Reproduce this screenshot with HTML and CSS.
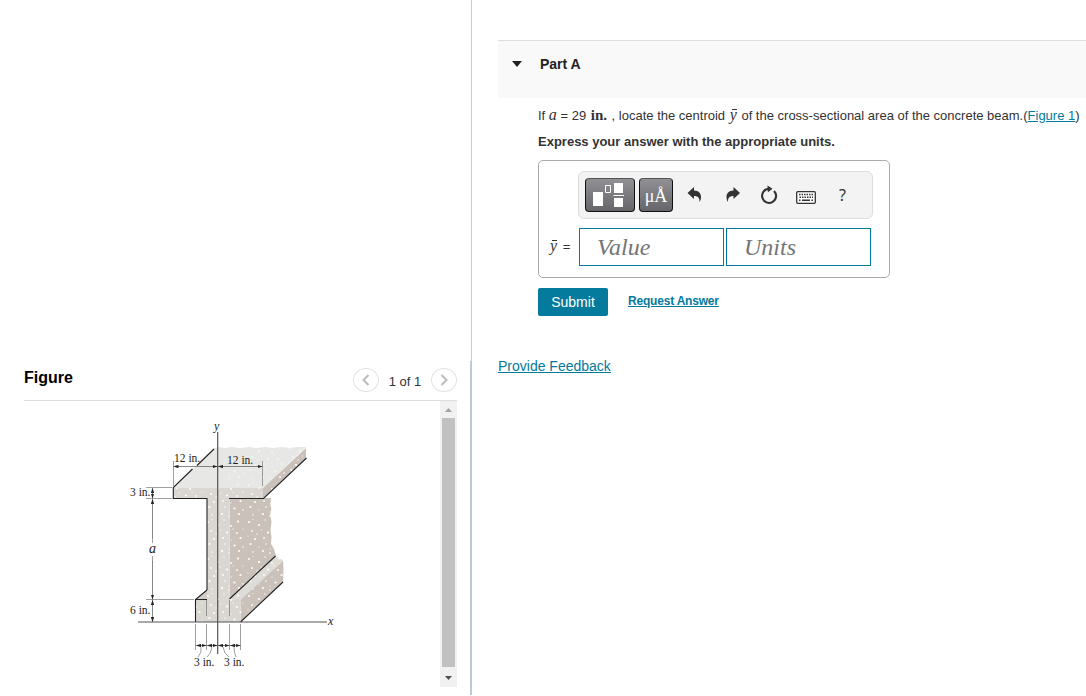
FILE: index.html
```
<!DOCTYPE html>
<html>
<head>
<meta charset="UTF-8">
<title>Part A</title>
<link rel="stylesheet" href="styles.css">
</head>
<body>
<div class="wrapper">
	<div class="left">
		<div class="figure-head">
			<h3>Figure</h3>
			<div class="pager">
				<button class="round"><svg width="10" height="14" viewBox="0 0 10 14"><path d="M7.500 2 2.500 7l5 5"/></svg></button>
				<span>1 of 1</span>
				<button class="round"><svg width="10" height="14" viewBox="0 0 10 14"><path d="M2.500 2l5 5-5 5"/></svg></button>
			</div>
		</div>
		<div class="figure-body">
			<svg class="beam" width="416" height="286" viewBox="24 401 416 286">
				<defs>
					<pattern id="specks" width="41" height="37" patternUnits="userSpaceOnUse">
						<g fill="#fff">
							<circle cx="3" cy="4" r="1"/><circle cx="7" cy="1.500" r=".6"/><circle cx="13" cy="7" r="1.100"/><circle cx="19" cy="2" r=".7"/>
							<circle cx="26" cy="8" r=".9"/><circle cx="33" cy="3.500" r="1.100"/><circle cx="38" cy="11" r=".6"/><circle cx="6" cy="13" r=".9"/>
							<circle cx="15.500" cy="12" r=".6"/><circle cx="22" cy="14.500" r="1.100"/><circle cx="32" cy="15" r=".9"/><circle cx="2" cy="18" r=".6"/>
							<circle cx="9" cy="21" r="1.100"/><circle cx="18" cy="20" r=".9"/><circle cx="26" cy="22" r=".6"/><circle cx="35.500" cy="20" r="1.100"/>
							<circle cx="4.500" cy="26" r="1.100"/><circle cx="13" cy="29" r=".6"/><circle cx="20" cy="26" r=".8"/><circle cx="29.500" cy="27.500" r="1.100"/>
							<circle cx="38" cy="29" r=".8"/><circle cx="7" cy="34" r=".8"/><circle cx="17" cy="33" r="1.100"/><circle cx="24" cy="35" r=".8"/>
							<circle cx="34" cy="33" r="1"/><circle cx="28" cy="11" r=".6"/><circle cx="11" cy="16" r=".7"/><circle cx="24" cy="31" r=".6"/>
						</g>
					</pattern>
					<marker id="arrow" viewBox="0 0 6 4" refX="6" refY="2" markerWidth="5" markerHeight="3.600" markerUnits="userSpaceOnUse" orient="auto-start-reverse"><path d="M0 0 6 2 0 4z" fill="#222"/></marker>
				</defs>
				<!-- web and base behind the front face -->
				<path fill="#cac1bb" d="M229.500 498H271l-.7 6 1 5-1 6 1.200 7-1 8 1 7-.5 7 3 5 2 7-46.500 43z"/>
				<path fill="#dedcd6" d="M229.500 599 275.500 556l3 1 2 2 2.500 1-42.500 41z"/>
				<path fill="#cac1bb" d="M240.500 600 283 560.500l.5 8-.5 14L240.500 622z"/>
				<path fill="#d2cbc6" d="M195.500 599.500 207 590v9.500z"/>
				<!-- flange -->
				<path fill="#e7e7e5" d="M173 488 214 448l5-1 6 1 7-1 8 1 9-1 7 1 9-1 8 1 9-1 8 1 7-1h9L263 488z"/>
				<path fill="#cac1bb" d="M263 488 306 448v10l-43 40.500z"/>
				<path fill="#dad7d2" d="M173 488h90v10.500h-33.500V599.500h11V622h-45v-22.500H207v-101h-34z"/>
				<path fill="url(#specks)" d="M173 488h90v10.500h-33.500V599.500h11V622h-45v-22.500H207v-101h-34z"/>
				<path fill="url(#specks)" d="M229.500 498H271v45l5 12 7 5v22L240.500 622v-22.500h-11zM263 488 306 448v10l-43 40.500z"/>
				<path fill="url(#specks)" opacity=".6" d="M214 488 250 448h56l-43 40z"/>
				<g class="edge">
					<path d="M192.500 469 173.300 487.500v11H207V590M229 498.500h34.500L306.500 458M197 465.500 214 449"/>
					<path d="M229.500 599 275.500 556M240.500 622 283 582M207 590 195.500 599.500V622M195.500 599.500H207"/>
				</g>
				<g class="thin">
					<path d="M206.500 600v16M229.500 600v16M146 487.500h26M146 498.500h26M146 599.500h48"/>
					<path d="M173.500 461v25M262.500 461v25M195.500 624v26M206.500 624v26M229.500 624v26M240.500 624v26"/>
					<path d="M201 647q1 6-3 10M212 647q-1 7-5 10M223 647q1 7 6 10M234 647q0 6 2 10"/>
				</g>
				<path class="axis" d="M217.700 432v222M138 622h189"/>
				<g class="dim">
					<path d="M173.500 466.500H217.500"/>
					<path d="M218 466.500h44.500"/>
					<path d="M152.500 488v10.500"/>
					<path d="M152.500 499v44"/>
					<path d="M152.500 600v22"/>
					<path d="M196 645.500h10.500"/>
					<path d="M207 645.500h10.500"/>
					<path d="M218 645.500h11.500"/>
					<path d="M230 645.500h10.500"/>
					<path d="M152.500 556v43.500"/>
				</g>
				<path fill="#fff" d="M150 538h5v5h-5zM150 556h5v5h-5z"/>
				<path class="thin" d="M152.500 537v6M152.500 556v6"/>
				<g class="label">
					<text x="174" y="462">12 in.</text>
					<text x="227" y="464">12 in.</text>
					<text x="130" y="496">3 in.</text>
					<text x="130" y="614">6 in.</text>
					<text x="194" y="666">3 in.</text>
					<text x="224" y="666">3 in.</text>
					<text class="var" x="214" y="430">y</text>
					<text class="var" x="328" y="625">x</text>
					<text class="var a" x="149" y="553">a</text>
				</g>
			</svg>
			<div class="scroll">
				<svg width="17" height="17" viewBox="0 0 17 17"><path fill="#a3a3a3" d="M5 11h7L8.500 7z"/></svg>
				<div class="thumb"></div>
				<svg width="17" height="20" viewBox="0 0 17 20"><path fill="#505050" d="M5 9h7l-3.500 4z"/></svg>
			</div>
		</div>
	</div>
	<div class="divider"></div>

	<div class="right">
		<div class="part">
			<svg width="10" height="6" viewBox="0 0 10 6"><path fill="#222" d="M0 0h10L5 6z"/></svg>
			<h4>Part A</h4>
		</div>
		<div class="content">
			<p class="question">If <i class="math">a</i> = 29 <span class="math unit">in.</span> , locate the centroid <i class="math bar">y</i> of the cross-sectional area of the concrete beam.(<a href="#">Figure 1</a>)</p>
			<p class="express">Express your answer with the appropriate units.</p>
			<div class="answer">
				<div class="toolbar">
					<button class="dark templates"><svg width="32" height="26" viewBox="0 0 32 26"><path fill="#fff" d="M0 10h10v14H0zM21 1h9v10h-9zM21 16h9v9h-9zM20.500 13h10.500v1H20.500z"/><path fill="none" stroke="#fff" d="M12.500 3.500h5v7h-5z"/></svg></button>
					<button class="dark units">μÅ</button>
					<svg class="tool undo" width="16" height="18" viewBox="0 0 16 18"><path fill="#333" d="M.5 7 7 1v3.500c5 0 7 3 7 6.500 0 2-.6 3.700-1.500 5 .2-4-1.300-6-5.500-6v3z"/></svg>
					<svg class="tool redo" width="16" height="18" viewBox="0 0 16 18"><path fill="#333" d="M15 7 8.500 1v3.500c-5 0-7 3-7 6.500 0 2 .6 3.700 1.500 5-.2-4 1.300-6 5.500-6v3z"/></svg>
					<svg class="tool reset" width="18" height="20" viewBox="0 0 18 20"><path fill="none" stroke="#333" stroke-width="2.100" d="M14 5.900A7 7 0 1 1 9 3.900"/><path fill="#333" d="M7.500.5 12.500 3.800l-4.600 3.400z"/></svg>
					<svg class="tool keyboard" width="20" height="13" viewBox="0 0 20 13"><rect x=".7" y=".7" width="18.600" height="11.600" rx="1" fill="#fff" stroke="#333" stroke-width="1.300"/><path fill="none" stroke="#333" stroke-width="1.500" stroke-dasharray="1.500 1" d="M3 3.500h14M3.500 6.200h13.500"/><path stroke="#333" stroke-width="1.500" d="M3 9.300h1.500M6 9.300h8M15.500 9.300H17"/></svg>
					<span class="help">?</span>
				</div>
				<div class="fields">
					<label><i class="math bar">y</i> =</label>
					<input class="field" type="text" placeholder="Value">
					<input class="field" type="text" placeholder="Units">
				</div>
			</div>
			<div class="actions">
				<button class="submit">Submit</button>
				<a class="request" href="#">Request Answer</a>
			</div>
		</div>
		<a class="feedback" href="#">Provide Feedback</a>
	</div>
</div>
</body>
</html>
```
FILE: styles.css
```
*{
	box-sizing:border-box;
}
body{
	margin:0;
	background:#fff;
	color:#333;
	font-family:"Liberation Sans", Arial, sans-serif;
	font-size:13px;
	overflow:hidden;
}
h3,h4,p{
	margin:0;
}
button{
	padding:0;
	font-family:inherit;
}
a{
	color:#047a9c;
}
.wrapper{
	display:flex;
	height:695px;
}
.left{
	width:470px;
	padding:361px 13px 0 24px;
	flex:none;
}
.figure-head{
	display:flex;
	justify-content:space-between;
	height:40px;
	border-bottom:1px solid #ddd;
}
.figure-head h3{
	padding-top:8px;
	color:#000;
	font-size:16px;
	line-height:18px;
}
.pager{
	display:flex;
	align-items:center;
	height:38px;
}
.pager span{
	width:52px;
	padding-top:2px;
	text-align:center;
	font-size:13px;
}
.round{
	display:flex;
	align-items:center;
	justify-content:center;
	width:26px;
	height:24px;
	border:1px solid #e3e3e3;
	border-radius:50%;
	background:#fff;
}
.round path{
	fill:none;
	stroke:#bbb;
	stroke-width:2;
}
.figure-body{
	display:flex;
	height:286px;
}
.beam{
	display:block;
	flex:none;
}
.scroll{
	width:17px;
	background:#f1f1f1;
}
.scroll svg{
	display:block;
}
.thumb{
	width:13px;
	height:249px;
	margin-left:2px;
	background:#c1c1c1;
}
.edge path{
	fill:none;
	stroke:#222;
	stroke-width:1.1;
}
.thin path, path.thin{
	fill:none;
	stroke:#777;
	stroke-width:.7;
}
.axis{
	fill:none;
	stroke:#555;
	stroke-width:1.2;
}
.dim path{
	fill:none;
	stroke:#555;
	stroke-width:.7;
	marker-start:url(#arrow);
	marker-end:url(#arrow);
}
.label{
	fill:#222;
	font-family:"Liberation Serif", serif;
	font-size:11.5px;
}
.var{
	font-style:italic;
	font-size:12px;
}
.a{
	font-size:14px;
}
.divider{
	width:2px;
	background:linear-gradient(#ccc, #ccc) 1px 0 / 1px 361px no-repeat, linear-gradient(#b7cbdd, #b7cbdd) 0 361px / 2px 334px no-repeat;
}
.right{
	flex:1;
	min-width:0;
	padding:40px 0 0 26px;
}
.part{
	display:flex;
	align-items:center;
	height:58px;
	padding:0 0 11px 14px;
	border-top:1px solid #ddd;
	background:#f9f9f9;
}
.part h4{
	margin-left:18px;
	color:#222;
	font-size:14px;
}
.content{
	padding-left:40px;
}
.question{
	padding-top:7px;
	line-height:22px;
	white-space:nowrap;
}
.express{
	padding-top:3px;
	font-weight:bold;
	line-height:24px;
}
.math{
	font-family:"Liberation Serif", serif;
	font-size:16px;
	line-height:1;
}
.unit{
	margin:0 1px;
	font-weight:bold;
	font-size:15px;
}
.bar{
	display:inline-block;
	margin:0 1px;
	line-height:11px;
	background:linear-gradient(#333, #333) 2px 0 / 6px 1px no-repeat;
}
.answer{
	width:352px;
	height:118px;
	margin-top:6px;
	padding:10px 0 0 10px;
	border:1px solid #aaa;
	border-radius:5px;
}
.toolbar{
	display:flex;
	align-items:center;
	width:295px;
	height:48px;
	margin-left:29px;
	padding-left:6px;
	border:1px solid #ddd;
	border-radius:6px;
	background:#f3f3f3;
}
.dark{
	display:flex;
	align-items:center;
	justify-content:center;
	height:34px;
	border:1px solid #111;
	border-top-color:#555;
	border-radius:4px;
	background:linear-gradient(#909095, #65656a);
	color:#fff;
}
.templates{
	width:50px;
	padding-right:2px;
}
.units{
	width:34px;
	margin-left:4px;
	padding-top:3px;
	font-family:"Liberation Serif", serif;
	font-size:18px;
}
.tool{
	flex:none;
}
.undo{
	margin-left:14px;
}
.redo{
	margin-left:22px;
}
.reset{
	margin-left:19px;
}
.keyboard{
	margin:4px 0 0 18px;
}
.help{
	margin-left:23px;
	font:16px "Noto Sans", sans-serif;
}
.fields{
	display:flex;
	align-items:center;
	gap:2px;
	margin-top:9px;
}
.fields label{
	width:28px;
	padding-bottom:2px;
	white-space:nowrap;
}
.fields .bar{
	margin-right:2px;
}
.field{
	width:145px;
	height:38px;
	padding:0 17px;
	border:1px solid #047a9c;
	border-radius:0;
	font:italic 24px "Liberation Serif", serif;
}
.field::placeholder{
	color:#757575;
}
.actions{
	display:flex;
	margin-top:10px;
}
.submit{
	width:70px;
	height:28px;
	border:0;
	border-radius:2px;
	background:#047a9c;
	color:#fff;
	font-size:14px;
}
.request{
	margin:6px 0 0 20px;
	font-size:12px;
	font-weight:bold;
	letter-spacing:-.2px;
}
.feedback{
	display:inline-block;
	margin-top:42px;
	font-size:14px;
}
```
